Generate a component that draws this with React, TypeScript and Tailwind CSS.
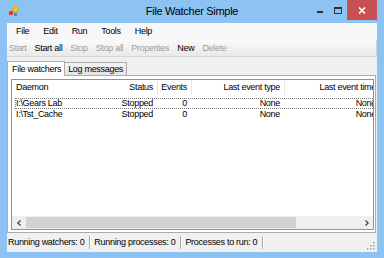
const toolItems = [
  { label: "Start", enabled: false },
  { label: "Start all", enabled: true },
  { label: "Stop", enabled: false },
  { label: "Stop all", enabled: false },
  { label: "Properties", enabled: false },
  { label: "New", enabled: true },
  { label: "Delete", enabled: false },
];

const watchers = [
  { daemon: "I:\\Gears Lab", status: "Stopped", events: 0, type: "None", time: "None" },
  { daemon: "I:\\Tst_Cache", status: "Stopped", events: 0, type: "None", time: "None" },
];

function AppIcon() {
  return (
    <svg width="11" height="11" viewBox="0 0 11 11">
      <rect x="1" y="3" width="8" height="7" fill="#b9b9b9" />
      <rect x="5" y="0" width="5" height="6" fill="#f2c521" />
      <rect x="5" y="0" width="5" height="6" fill="none" stroke="#c99a10" strokeWidth="0.6" />
      <circle cx="3" cy="7" r="2.2" fill="#d83a2c" />
      <rect x="6" y="7" width="3" height="3" fill="#4f86c6" />
    </svg>
  );
}

function TitleBar() {
  return (
    <div className="h-[23px] flex items-start shrink-0">
      <div className="w-[64px] pl-[1px] pt-[6px]">
        <AppIcon />
      </div>
      <div className="flex-1 text-center text-[11px] tracking-[-0.3px] pt-[6px] text-black">
        File Watcher Simple
      </div>
      <div className="w-[64px] flex items-start">
        <div className="ml-[4px] mt-[11px] w-[6px] h-[2px] bg-[#333]" />
        <div className="ml-[11px] mt-[7px] w-[8px] h-[7px] border border-t-2 border-[#333]" />
        <div className="ml-[5px] w-[30px] h-[20px] bg-[#c75050] flex items-center justify-center">
          <svg width="8" height="7" viewBox="0 0 8 7">
            <path d="M1 0.5 L7 6.5 M7 0.5 L1 6.5" stroke="#fff" strokeWidth="1.6" />
          </svg>
        </div>
      </div>
    </div>
  );
}

function MenuBar() {
  return (
    <div className="h-[17px] bg-[#f7f7f7] flex items-center pl-[9px] gap-[14px] shrink-0">
      {["File", "Edit", "Run", "Tools", "Help"].map((m) => (
        <span key={m}>{m}</span>
      ))}
    </div>
  );
}

function ToolBar() {
  return (
    <div className="h-[17px] bg-gradient-to-b from-[#fafafa] to-[#e9e9e9] border-b border-r border-[#d5d5d5] rounded-br-[2px] flex items-center pl-[2px] gap-[8px] shrink-0">
      {toolItems.map((t) => (
        <span key={t.label} className={t.enabled ? "text-black" : "text-[#9d9d9d]"}>
          {t.label}
        </span>
      ))}
    </div>
  );
}

function Chevron({ dir }: { dir: "left" | "right" }) {
  return (
    <svg width="4" height="6" viewBox="0 0 4 6">
      <path d={dir === "left" ? "M3.5 0.5 L0.8 3 L3.5 5.5" : "M0.5 0.5 L3.2 3 L0.5 5.5"} fill="none" stroke="#333" strokeWidth="1.1" />
    </svg>
  );
}

function ListView() {
  return (
    <div className="flex-1 border border-[#8e939b] bg-white flex flex-col overflow-hidden min-h-0">
      <div className="h-[15px] flex items-center shrink-0">
        <div className="w-[103px] shrink-0 pl-[4px]">Daemon</div>
        <div className="w-[42px] shrink-0 text-right pr-[4px]">Status</div>
        <div className="w-[34px] shrink-0 text-right pr-[4px] border-l border-[#e6e6e6] h-full flex items-center justify-end">Events</div>
        <div className="w-[93px] shrink-0 pr-[4px] border-l border-[#e6e6e6] h-full flex items-center justify-end">Last event type</div>
        <div className="w-[96px] shrink-0 pr-[4px] border-l border-[#e6e6e6] h-full flex items-center justify-end">Last event time</div>
      </div>
      <div className="mt-[3px] flex flex-col">
        {watchers.map((w, i) => (
          <div key={w.daemon} className="relative h-[11px] flex items-center">
            {i === 0 && (
              <div className="absolute left-[3px] right-0 top-0 bottom-0 border border-dotted border-[#7a7a7a]" />
            )}
            <div className="w-[103px] shrink-0 pl-[4px]">{w.daemon}</div>
            <div className="w-[42px] shrink-0 text-right pr-[4px]">{w.status}</div>
            <div className="w-[34px] shrink-0 text-right pr-[4px]">{w.events}</div>
            <div className="w-[93px] shrink-0 text-right pr-[4px]">{w.type}</div>
            <div className="w-[96px] shrink-0 text-right pr-[4px]">{w.time}</div>
          </div>
        ))}
      </div>
      <div className="flex-1" />
      <div className="h-[13px] flex items-stretch bg-[#efefef] shrink-0">
        <div className="w-[13px] flex items-center justify-center">
          <Chevron dir="left" />
        </div>
        <div className="flex-1 flex items-stretch py-[1px] pl-[1px]">
          <div className="w-[270px] bg-[#d1d1d1]" />
        </div>
        <div className="w-[13px] flex items-center justify-center">
          <Chevron dir="right" />
        </div>
      </div>
    </div>
  );
}

function Tabs() {
  return (
    <div className="flex-1 flex flex-col mt-[4px] min-h-0">
      <div className="h-[14px] flex items-end shrink-0">
        <div className="h-[15px] bg-white border border-b-0 border-[#acacac] pl-[4px] pr-[3px] flex items-center relative z-10 -mb-px">
          File watchers
        </div>
        <div className="h-[13px] bg-gradient-to-b from-[#f3f3f3] to-[#e4e4e4] border border-l-0 border-b-0 border-[#acacac] px-[3px] flex items-center">
          Log messages
        </div>
      </div>
      <div className="flex-1 bg-white border border-[#acacac] mr-[1px] pl-[3px] pr-[1px] pt-[3px] pb-[2px] flex flex-col min-h-0">
        <ListView />
      </div>
    </div>
  );
}

function StatusBar() {
  const panels = ["Running watchers: 0", "Running processes: 0", "Processes to run: 0"];
  return (
    <div className="h-[19px] flex items-center pl-[1px] shrink-0 bg-[#f0f0f0]">
      {panels.map((p) => (
        <div key={p} className="flex items-center">
          <span className="pr-[5px]">{p}</span>
          <div className="w-[2px] h-[13px] border-l border-[#a9a9a9] border-r border-r-white mr-[3px]" />
        </div>
      ))}
      <div className="ml-auto mr-[2px] self-end mb-[2px]">
        <svg width="8" height="8" viewBox="0 0 8 8">
          <rect x="6" y="0" width="1.5" height="1.5" fill="#a0a0a0" />
          <rect x="3" y="3" width="1.5" height="1.5" fill="#a0a0a0" />
          <rect x="6" y="3" width="1.5" height="1.5" fill="#a0a0a0" />
          <rect x="0" y="6" width="1.5" height="1.5" fill="#a0a0a0" />
          <rect x="3" y="6" width="1.5" height="1.5" fill="#a0a0a0" />
          <rect x="6" y="6" width="1.5" height="1.5" fill="#a0a0a0" />
        </svg>
      </div>
    </div>
  );
}

export default function App() {
  return (
    <div className="w-[384px] h-[258px] bg-[#8cc3f2] flex flex-col px-[7px] pb-[6px] font-['Liberation_Sans',Arial,sans-serif] text-[9px] tracking-[-0.3px] leading-none text-black whitespace-nowrap overflow-hidden">
      <TitleBar />
      <div className="flex-1 bg-[#f0f0f0] flex flex-col min-h-0">
        <MenuBar />
        <ToolBar />
        <Tabs />
        <StatusBar />
      </div>
    </div>
  );
}
